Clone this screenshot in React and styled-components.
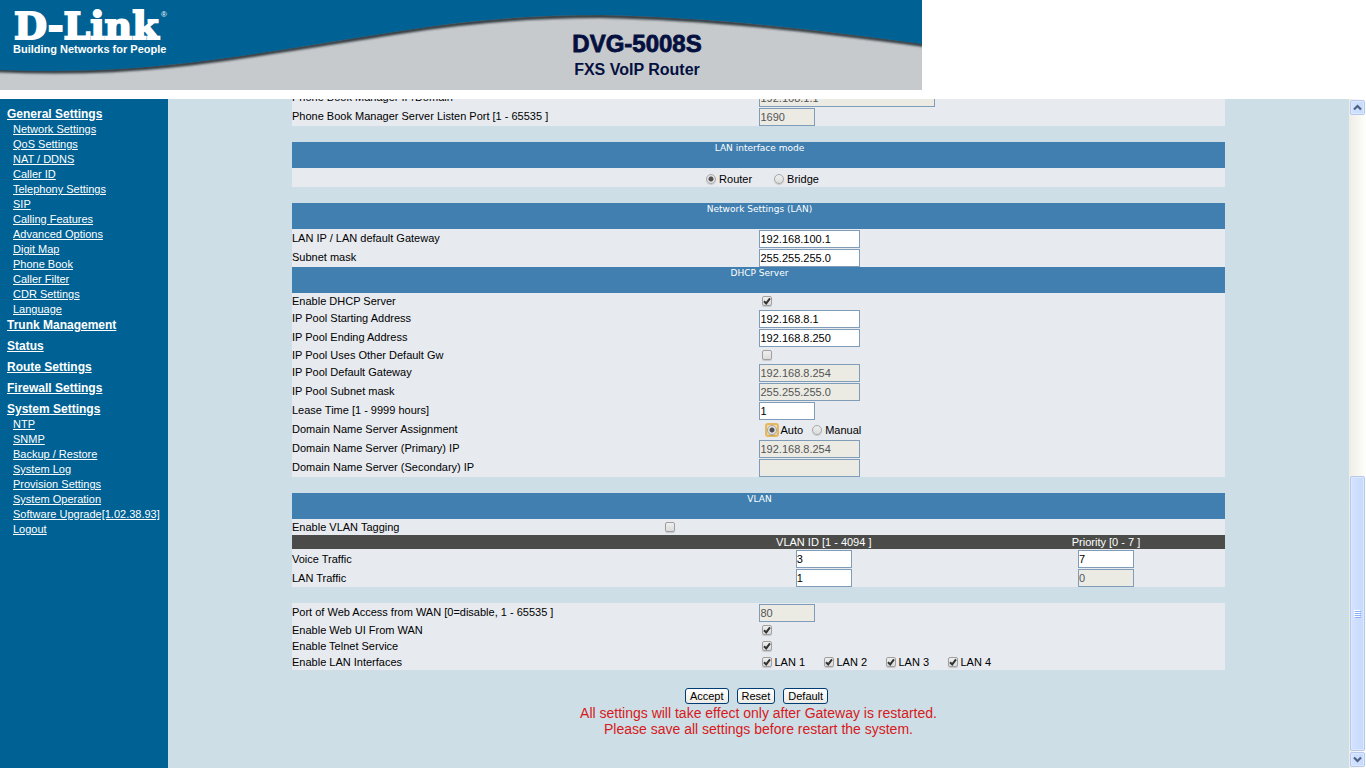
import React from "react";
import styled, { createGlobalStyle } from "styled-components";

const GlobalStyle = createGlobalStyle`
  * {
    box-sizing: border-box;
  }

  body {
    margin: 0;
    background-color: #fff;
    font-family: "Liberation Sans", Arial, sans-serif;
    font-size: 11px;
    color: #000;
  }
`;

const Page = styled.div`
  display: flex;
  flex-direction: column;
  height: 100vh;
  overflow: hidden;
`;

const Banner = styled.header`
  flex: none;
  height: 99px;

  svg {
    display: block;
  }
`;

const Body = styled.div`
  display: flex;
  flex: 1;
  min-height: 0;
`;

const Sidebar = styled.nav`
  flex: none;
  width: 168px;
  padding: 8px 0 0 7px;
  background-color: #006294;
  line-height: 15px;

  a {
    color: #fff;
    white-space: nowrap;
  }

  ul {
    margin: 0;
    padding: 0 0 1px 6px;
    list-style: none;
  }
`;

const MenuGroup = styled.div`
  margin-bottom: ${(props) => (props.$open ? "0" : "6px")};
`;

const MenuTitle = styled.a`
  display: block;
  font-size: 12px;
  font-weight: bold;
`;

/* the frame is scrolled down to its end, so the form hangs from the bottom */
const Content = styled.main`
  display: flex;
  flex: 1;
  flex-direction: column;
  justify-content: flex-end;
  align-items: center;
  min-width: 0;
  padding-bottom: 31px;
  overflow: hidden;
  background-color: #cddee6;
`;

const Form = styled.form`
  display: flex;
  flex: none;
  flex-direction: column;
  gap: 16px;
  width: 79%;
`;

const Section = styled.section`
  background-color: #e7eaef;
`;

const SectionTitle = styled.h2`
  height: 26px;
  margin: 0;
  padding-left: 2px;
  background-color: #407fb0;
  color: #fff;
  font-family: "DejaVu Sans", Verdana, sans-serif;
  font-size: 9px;
  font-weight: normal;
  line-height: 12px;
  text-align: center;
`;

const Row = styled.div`
  display: grid;
  grid-template-columns: 1fr 1fr;
  align-items: center;
  height: ${(props) => (props.$short ? "16px" : "19px")};
  white-space: nowrap;
`;

const RowLabel = styled.label`
  padding-bottom: ${(props) => (props.$short ? "0" : "2px")};
`;

const Cell = styled.div`
  display: flex;
  align-items: center;
`;

const RadioCell = styled(Cell)`
  gap: 5px;
  padding-left: 5px;
`;

const CenterRow = styled.div`
  display: flex;
  justify-content: center;
  gap: 18px;
  height: 19px;
  padding: 2px 0 0 4px;
`;

const widths = { small: "56px", medium: "101px", large: "176px" };

const TextInput = styled.input`
  display: block;
  width: ${(props) => widths[props.$size || "medium"]};
  height: 18px;
  margin: 1px 0 0 1px;
  padding: 0;
  border: 1px solid #7f9db9;
  border-radius: 0;
  background-color: #fff;
  color: #000;
  font-family: inherit;
  font-size: 11px;

  &:disabled {
    background-color: #ebebe4;
    color: #545454;
  }
`;

const CheckInput = styled.input`
  appearance: none;
  display: block;
  flex: none;
  width: 10px;
  height: 10px;
  margin: 0 2px 0 4px;
  border: 1px solid #a0a0a0;
  border-radius: 2px;
  background: linear-gradient(#eeeeee, #dcdcdc);
  box-shadow: 0 1px 1px rgba(0, 0, 0, 0.15);

  &:checked {
    background: url("data:image/svg+xml,%3Csvg xmlns='http://www.w3.org/2000/svg' viewBox='0 0 8 8'%3E%3Cpath d='M1 4.2L3.2 6.4L7 1.4' fill='none' stroke='%23333' stroke-width='2'/%3E%3C/svg%3E"),
      linear-gradient(#eeeeee, #dcdcdc);
  }
`;

const RadioInput = styled.input`
  appearance: none;
  display: block;
  flex: none;
  width: 10px;
  height: 10px;
  margin: 0 3px 0 4px;
  border: 1px solid #a8a8a8;
  border-radius: 50%;
  background: linear-gradient(#eeeeee, #dcdcdc);
  box-shadow: 0 1px 1px rgba(0, 0, 0, 0.15);

  &:checked {
    background: radial-gradient(circle, #505050 0 2px, #e4e4e4 3px);
  }
`;

const FocusRing = styled.span`
  display: flex;
  margin: 0 1px 0 2px;
  border: 2px solid #e5b860;
  border-radius: 3px;
  background-color: #f3dcae;

  ${RadioInput} {
    margin: 0;
  }
`;

const OptionLabel = styled.label`
  display: flex;
  align-items: center;
  min-width: ${(props) => props.$width || "0"};
  line-height: 16px;
`;

const VlanTable = styled.table`
  width: 100%;
  border-collapse: collapse;
  table-layout: fixed;

  td,
  th {
    height: 19px;
    padding: 0;
    font-weight: normal;
    text-align: left;
    vertical-align: middle;
  }

  thead th {
    height: 14px;
    background-color: #4b4c49;
    color: #fff;
    line-height: 14px;
    text-align: center;
  }

  thead tr:first-child > * {
    height: 16px;
  }

  ${TextInput} {
    margin: 1px auto 0;
  }
`;

const Footer = styled.div`
  flex: none;
  padding-top: 18px;
  color: #d71920;
  font-size: 14px;
  line-height: 16px;
  text-align: center;

  p {
    margin: 0;
  }
`;

const Buttons = styled.div`
  display: flex;
  justify-content: center;
  gap: 8px;
  margin-bottom: 1px;
  padding-right: 4px;
`;

const Button = styled.button`
  height: 16px;
  padding: 0 4px;
  border: 1px solid #003c74;
  border-radius: 3px;
  background: linear-gradient(#ffffff, #ecebe5);
  color: #000;
  font-family: inherit;
  font-size: 11px;
  line-height: 14px;
`;

const ScrollBar = styled.div`
  display: flex;
  flex: none;
  flex-direction: column;
  gap: 1px;
  width: 17px;
  padding: 1px;
  background: linear-gradient(to right, #eeede5, #fefefb);
`;

const ScrollPart = styled.div`
  display: flex;
  flex: ${(props) => props.$grow || "none"};
  align-items: center;
  justify-content: center;
  min-height: 15px;
  border: 1px solid #b4c8f0;
  border-radius: 2px;
  background: linear-gradient(to right, #d4e3ff, #c6dafc);
  box-shadow: inset 0 0 0 1px #dce8ff;
`;

const ScrollGap = styled.div`
  flex: 361;
`;

const generalLinks = [
  "Network Settings",
  "QoS Settings",
  "NAT / DDNS",
  "Caller ID",
  "Telephony Settings",
  "SIP",
  "Calling Features",
  "Advanced Options",
  "Digit Map",
  "Phone Book",
  "Caller Filter",
  "CDR Settings",
  "Language",
];

const systemLinks = [
  "NTP",
  "SNMP",
  "Backup / Restore",
  "System Log",
  "Provision Settings",
  "System Operation",
  "Software Upgrade[1.02.38.93]",
  "Logout",
];

const menu = [
  { title: "General Settings", links: generalLinks },
  { title: "Trunk Management" },
  { title: "Status" },
  { title: "Route Settings" },
  { title: "Firewall Settings" },
  { title: "System Settings", links: systemLinks },
];

const Logo = () => (
  <svg width="922" height="90" viewBox="0 0 922 90">
    <defs>
      <filter id="soft" x="-5%" y="-20%" width="110%" height="140%">
        <feGaussianBlur stdDeviation="1.3" />
      </filter>
    </defs>
    <rect width="922" height="90" fill="#c6cacd" />
    <path
      d="M-10 70C55 73 110 72 167 66C245 58 322 44 400 32C468 21 535 16 600 16C710 18 820 31 932 46"
      fill="none"
      stroke="#333a40"
      strokeWidth="4"
      filter="url(#soft)"
    />
    <path
      d="M0 70C55 72 110 71 167 65C245 57 322 43 400 31C468 20 535 15 600 15C710 17 820 30 922 44V0H0Z"
      fill="#006294"
    />
    <g fill="#fff">
      <text
        x="14"
        y="39"
        fontFamily="DejaVu Serif, serif"
        fontWeight="bold"
        fontSize="38"
        stroke="#fff"
        strokeWidth="2"
      >
        D-Link
      </text>
      <text x="161" y="17" fontSize="8" fontFamily="Liberation Sans, sans-serif">
        ®
      </text>
      <text
        x="13"
        y="53"
        fontFamily="Liberation Sans, sans-serif"
        fontWeight="bold"
        fontSize="11"
      >
        Building Networks for People
      </text>
    </g>
    <g fill="#05103f" textAnchor="middle">
      <text
        x="637"
        y="52"
        fontFamily="Liberation Sans, sans-serif"
        fontWeight="bold"
        fontSize="24"
        stroke="#05103f"
        strokeWidth="0.8"
      >
        DVG-5008S
      </text>
      <text
        x="637"
        y="75"
        fontFamily="Liberation Sans, sans-serif"
        fontWeight="bold"
        fontSize="16"
      >
        FXS VoIP Router
      </text>
    </g>
  </svg>
);

const Chevron = ({ down }) => (
  <svg width="9" height="7" viewBox="0 0 9 7">
    <path
      d={down ? "M1 1.5L4.5 5L8 1.5" : "M1 5.5L4.5 2L8 5.5"}
      fill="none"
      stroke="#4d6185"
      strokeWidth="2.2"
    />
  </svg>
);

const Field = ({ id, label, value, size, disabled }) => (
  <Row>
    <RowLabel htmlFor={id}>{label}</RowLabel>
    <TextInput
      id={id}
      type="text"
      defaultValue={value}
      $size={size}
      disabled={disabled}
    />
  </Row>
);

const CheckField = ({ id, label, checked }) => (
  <Row $short>
    <RowLabel $short htmlFor={id}>
      {label}
    </RowLabel>
    <CheckInput id={id} type="checkbox" defaultChecked={checked} />
  </Row>
);

const Radio = ({ name, label, checked, focused }) => {
  const input = <RadioInput type="radio" name={name} defaultChecked={checked} />;
  return (
    <OptionLabel>
      {focused ? <FocusRing>{input}</FocusRing> : input}
      {label}
    </OptionLabel>
  );
};

const VlanRow = ({ id, label, vlan, priority, locked }) => (
  <tr>
    <th scope="row">{label}</th>
    <td>
      <TextInput
        aria-label={`${label} VLAN ID`}
        id={`${id}-vlan`}
        type="text"
        defaultValue={vlan}
        $size="small"
      />
    </td>
    <td>
      <TextInput
        aria-label={`${label} priority`}
        id={`${id}-priority`}
        type="text"
        defaultValue={priority}
        $size="small"
        disabled={locked}
      />
    </td>
  </tr>
);

const App = () => {
  return (
    <Page>
      <GlobalStyle />
      <Banner>
        <Logo />
      </Banner>
      <Body>
        <Sidebar>
          {menu.map(({ title, links }) => (
            <MenuGroup key={title} $open={links !== undefined}>
              <MenuTitle href="#">{title}</MenuTitle>
              {links && (
                <ul>
                  {links.map((link) => (
                    <li key={link}>
                      <a href="#">{link}</a>
                    </li>
                  ))}
                </ul>
              )}
            </MenuGroup>
          ))}
        </Sidebar>

        <Content>
          <Form id="network" onSubmit={(e) => e.preventDefault()}>
            <Section>
              <Field
                id="pb-domain"
                label="Phone Book Manager IP/Domain"
                value="192.168.1.1"
                size="large"
                disabled
              />
              <Field
                id="pb-port"
                label="Phone Book Manager Server Listen Port [1 - 65535 ]"
                value="1690"
                size="small"
                disabled
              />
            </Section>

            <Section>
              <SectionTitle>LAN interface mode</SectionTitle>
              <CenterRow>
                <Radio name="mode" label="Router" checked />
                <Radio name="mode" label="Bridge" />
              </CenterRow>
            </Section>

            <Section>
              <SectionTitle>Network Settings (LAN)</SectionTitle>
              <Field id="lan-ip" label="LAN IP / LAN default Gateway" value="192.168.100.1" />
              <Field id="lan-mask" label="Subnet mask" value="255.255.255.0" />
              <SectionTitle>DHCP Server</SectionTitle>
              <CheckField id="dhcp" label="Enable DHCP Server" checked />
              <Field id="pool-start" label="IP Pool Starting Address" value="192.168.8.1" />
              <Field id="pool-end" label="IP Pool Ending Address" value="192.168.8.250" />
              <CheckField id="pool-gw" label="IP Pool Uses Other Default Gw" />
              <Field id="pool-gateway" label="IP Pool Default Gateway" value="192.168.8.254" disabled />
              <Field id="pool-mask" label="IP Pool Subnet mask" value="255.255.255.0" disabled />
              <Field id="lease" label="Lease Time [1 - 9999 hours]" value="1" size="small" />
              <Row>
                <RowLabel as="span">Domain Name Server Assignment</RowLabel>
                <RadioCell>
                  <Radio name="dns" label="Auto" checked focused />
                  <Radio name="dns" label="Manual" />
                </RadioCell>
              </Row>
              <Field id="dns-1" label="Domain Name Server (Primary) IP" value="192.168.8.254" disabled />
              <Field id="dns-2" label="Domain Name Server (Secondary) IP" value="" disabled />
            </Section>

            <Section>
              <SectionTitle>VLAN</SectionTitle>
              <VlanTable>
                <colgroup>
                  <col width="39.5%" />
                  <col width="35%" />
                  <col width="25.5%" />
                </colgroup>
                <thead>
                  <tr>
                    <td>
                      <label htmlFor="vlan-tag">Enable VLAN Tagging</label>
                    </td>
                    <td colSpan="2">
                      <CheckInput id="vlan-tag" type="checkbox" />
                    </td>
                  </tr>
                  <tr>
                    <th />
                    <th scope="col">VLAN ID [1 - 4094 ]</th>
                    <th scope="col">Priority [0 - 7 ]</th>
                  </tr>
                </thead>
                <tbody>
                  <VlanRow id="voice" label="Voice Traffic" vlan="3" priority="7" />
                  <VlanRow id="lan" label="LAN Traffic" vlan="1" priority="0" locked />
                </tbody>
              </VlanTable>
            </Section>

            <Section>
              <Field
                id="wan-port"
                label="Port of Web Access from WAN [0=disable, 1 - 65535 ]"
                value="80"
                size="small"
                disabled
              />
              <CheckField id="web-ui" label="Enable Web UI From WAN" checked />
              <CheckField id="telnet" label="Enable Telnet Service" checked />
              <Row $short>
                <span>Enable LAN Interfaces</span>
                <Cell>
                  {[1, 2, 3, 4].map((n) => (
                    <OptionLabel key={n} $width="62px">
                      <CheckInput type="checkbox" defaultChecked />
                      LAN {n}
                    </OptionLabel>
                  ))}
                </Cell>
              </Row>
            </Section>
          </Form>

          <Footer>
            <Buttons>
              <Button type="submit" form="network">
                Accept
              </Button>
              <Button type="reset" form="network">
                Reset
              </Button>
              <Button type="button">Default</Button>
            </Buttons>
            <p>All settings will take effect only after Gateway is restarted.</p>
            <p>Please save all settings before restart the system.</p>
          </Footer>
        </Content>

        <ScrollBar aria-hidden="true">
          <ScrollPart>
            <Chevron />
          </ScrollPart>
          <ScrollGap />
          <ScrollPart $grow="274">
            <svg width="7" height="8" viewBox="0 0 7 8">
              <path d="M0 .5H6M0 2.5H6M0 4.5H6M0 6.5H6" stroke="#fff" />
              <path d="M1 1.5H7M1 3.5H7M1 5.5H7M1 7.5H7" stroke="#8cb0f8" />
            </svg>
          </ScrollPart>
          <ScrollPart>
            <Chevron down />
          </ScrollPart>
        </ScrollBar>
      </Body>
    </Page>
  );
};

export default App;
